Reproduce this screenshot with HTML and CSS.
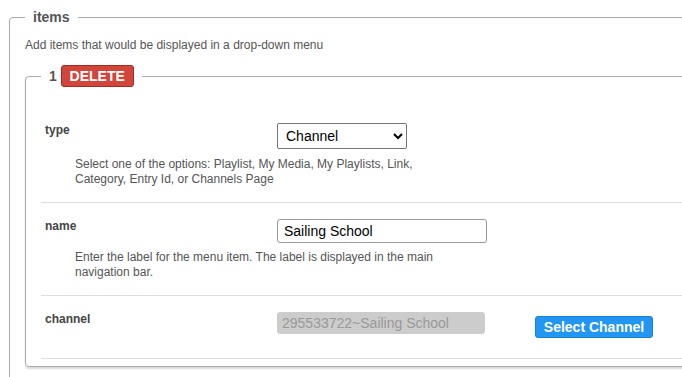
FILE: index.html
```html
<!DOCTYPE html>
<html lang="en">
<head>
    <meta charset="UTF-8">
    <meta name="viewport" content="width=device-width, initial-scale=1.0">
    <title>Menu items</title>
    <link rel="stylesheet" href="styles.css">
</head>
<body>
    <fieldset class="group">
        <legend class="group-title">items</legend>
        <p class="group-desc">Add items that would be displayed in a drop-down menu</p>

        <fieldset class="item">
            <legend class="item-title">1 <button class="delete-btn">DELETE</button></legend>

            <div class="row row-first">
                <label class="row-label">type</label>
                <div class="row-field">
                    <select class="select">
                        <option>Channel</option>
                        <option>Playlist</option>
                        <option>My Media</option>
                        <option>My Playlists</option>
                        <option>Link</option>
                        <option>Category</option>
                        <option>Entry Id</option>
                        <option>Channels Page</option>
                    </select>
                </div>
                <p class="row-help">Select one of the options: Playlist, My Media, My Playlists, Link, Category, Entry Id, or Channels Page</p>
            </div>

            <div class="row">
                <label class="row-label">name</label>
                <div class="row-field">
                    <input class="text-input" type="text" value="Sailing School">
                </div>
                <p class="row-help">Enter the label for the menu item. The label is displayed in the main navigation bar.</p>
            </div>

            <div class="row row-last">
                <label class="row-label">channel</label>
                <div class="row-field">
                    <input class="text-input disabled-input" type="text" value="295533722~Sailing School" disabled>
                    <button class="select-btn">Select Channel</button>
                </div>
            </div>
        </fieldset>
    </fieldset>
</body>
</html>
```

FILE: styles.css
```css
html, body {
    margin: 0;
    padding: 0;
    background: #fff;
    overflow: hidden;
}
body {
    font-family: "Liberation Sans", Arial, sans-serif;
    font-size: 12px;
    color: #555;
    width: 682px;
    height: 377px;
}
.group {
    margin: 9px 0 0 9px;
    width: 720px;
    border: 1px solid #aaa;
    border-radius: 4px;
    padding: 0 0 20px 15px;
    min-width: 0;
}
.group-title {
    padding: 0 8px;
    font-size: 14px;
    line-height: 16px;
    font-weight: bold;
    color: #555;
}
.group-desc {
    margin: 13px 0 12px 0;
    line-height: 15px;
}
.item {
    margin: 0;
    border: 1px solid #aaa;
    border-radius: 4px;
    padding: 20px 0 7px 15px;
    box-shadow: 0 2px 2px rgba(0, 0, 0, 0.15);
    min-width: 0;
}
.item-title {
    padding: 0 8px;
    font-size: 14px;
    font-weight: bold;
    color: #555;
    line-height: 22px;
}
.delete-btn {
    font-family: "Liberation Sans", Arial, sans-serif;
    font-size: 14px;
    font-weight: bold;
    color: #fff;
    background: #d2453a;
    border: 1px solid #a52a20;
    border-radius: 3px;
    height: 22px;
    width: 73px;
    padding: 0;
    margin-left: 0;
    vertical-align: top;
}
.row {
    display: grid;
    grid-template-columns: 232px 1fr;
    padding: 16px 0 15px 4px;
    border-bottom: 1px solid #ddd;
}
.row-first .row-help {
    margin-top: 8px;
}
.row-last {
    padding-bottom: 20px;
}
.row-label {
    font-weight: bold;
    color: #444;
    line-height: 15px;
}
.row-field {
    display: flex;
    align-items: flex-start;
}
.row-help {
    grid-column: 1 / 3;
    margin: 7px 0 0 30px;
    line-height: 15px;
    width: 370px;
}
.select {
    width: 130px;
    height: 26px;
    font-family: "Liberation Sans", Arial, sans-serif;
    font-size: 14px;
    color: #000;
    border: 1px solid #767676;
    border-radius: 2px;
    background: #fff;
    padding: 0 4px;
}
.text-input {
    width: 210px;
    height: 24px;
    box-sizing: border-box;
    font-family: "Liberation Sans", Arial, sans-serif;
    font-size: 14px;
    color: #000;
    border: 1px solid #999;
    border-radius: 3px;
    padding: 0 6px;
    margin: 0;
}
.disabled-input {
    width: 208px;
    height: 22px;
    background: #ccc;
    border-color: #ccc;
    color: #999;
    padding: 0 4px;
}
.select-btn {
    margin: 4px 0 0 50px;
    width: 118px;
    height: 22px;
    font-family: "Liberation Sans", Arial, sans-serif;
    font-size: 14px;
    font-weight: bold;
    color: #fff;
    background: #2196f3;
    border: 1px solid #1a80d4;
    border-radius: 3px;
    padding: 0;
}
```
